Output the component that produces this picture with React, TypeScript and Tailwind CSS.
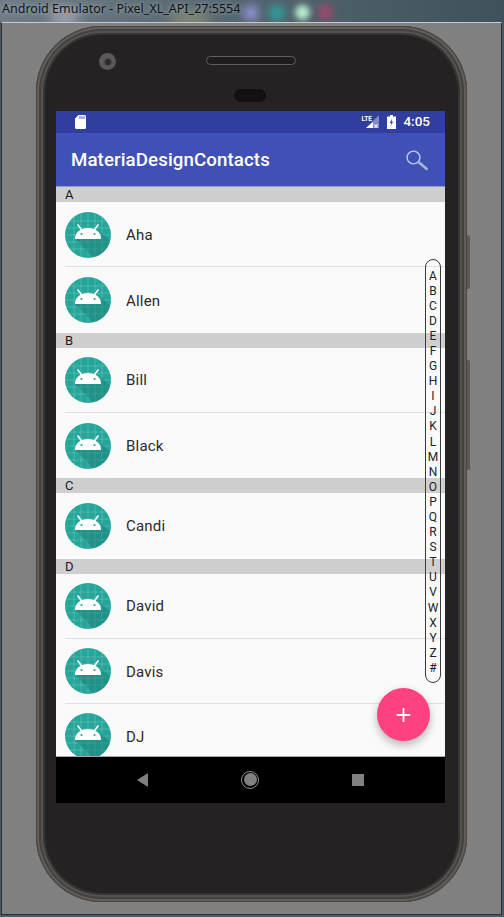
import React from "react";

const Avatar = () => (
  <svg width="46" height="46" viewBox="0 0 46 46" className="shrink-0 mt-[0.5px]">
    <defs>
      <clipPath id="avatarClip">
        <circle cx="23" cy="23" r="23" />
      </clipPath>
    </defs>
    <g clipPath="url(#avatarClip)">
      <rect width="46" height="46" fill="#26a69a" />
      <g stroke="#ffffff" strokeOpacity="0.22" strokeWidth="0.8">
        <path d="M0 9H46M0 16H46M0 23H46M0 30H46M0 37H46M9 0V46M16 0V46M23 0V46M30 0V46M37 0V46" />
      </g>
      <path d="M10 27 L30 47 L50 47 L50 34 L36 20 L36 27 Z" fill="#17776e" opacity="0.42" />
    </g>
    <path d="M10 27 C10 20 15.5 16 23 16 C30.5 16 36 20 36 27 Z" fill="#ffffff" />
    <path d="M13 13 L17 18.5 M33 13 L29 18.5" stroke="#ffffff" strokeWidth="1.6" strokeLinecap="round" />
    <circle cx="16.5" cy="22" r="1.1" fill="#26a69a" />
    <circle cx="29.5" cy="22" r="1.1" fill="#26a69a" />
  </svg>
);

const Row = ({ name, divider = true }: { name: string; divider?: boolean }) => (
  <div className="h-[65.2px] shrink-0 pl-[9px] flex">
    <div className={`flex-1 flex items-center gap-[15px] ${divider ? "border-b border-[#dfe2e2]" : ""}`}>
      <Avatar />
      <span className="mt-[1.6px] text-[15px] text-[#2b2b2b] tracking-[0.2px] w-[60px]">{name}</span>
    </div>
  </div>
);

const Section = ({ label }: { label: string }) => (
  <div className="h-[15.2px] shrink-0 bg-[#cfcfcf] pl-[9px] flex items-center text-[13px] leading-none text-[#1a1a1a]">
    {label}
  </div>
);

const letters = "ABCDEFGHIJKLMNOPQRSTUVWXYZ#".split("");

export default function App() {
  return (
    <div
      className="w-[504px] h-[917px] relative overflow-hidden bg-[#4a5a64] flex flex-col"
      style={{ fontFamily: "Roboto, sans-serif" }}
    >
      {/* desktop title strip */}
      <div className="h-[22px] shrink-0 relative overflow-hidden bg-gradient-to-r from-[#6f7c86] via-[#53656f] to-[#3f525c]">
        <div className="absolute left-[50px] top-[8px] w-[30px] h-[20px] rounded-full bg-[#c8c0d0] opacity-50 blur-[6px]" />
        <div className="absolute left-[170px] top-[12px] w-[40px] h-[16px] rounded-full bg-[#a8a070] opacity-50 blur-[6px]" />
        <div className="absolute left-[243px] top-[5px] w-[16px] h-[16px] rounded-full bg-[#8f8fd0] blur-[4px]" />
        <div className="absolute left-[269px] top-[5px] w-[16px] h-[16px] rounded-full bg-[#2f9f9f] blur-[4px]" />
        <div className="absolute left-[295px] top-[5px] w-[15px] h-[15px] rounded-full bg-[#b8f0d0] blur-[3px]" />
        <div className="absolute left-[319px] top-[5px] w-[13px] h-[15px] rounded-full bg-[#b0446c] blur-[4px]" />
        <span
          className="absolute left-[2px] top-[0px] text-[12.5px] leading-[18px] text-[#101418] whitespace-nowrap"
          style={{ fontFamily: '"Noto Sans", sans-serif', textShadow: "0 0 5px rgba(255,255,255,0.55)" }}
        >
          Android Emulator - Pixel_XL_API_27:5554
        </span>
      </div>

      {/* emulator window */}
      <div className="ml-[1px] w-[501px] h-[893px] shrink-0 border border-[#2b3238] border-t-[#c5ccd0] bg-[#808080]">
        <div className="relative mt-[3px] ml-[34px] w-[431px] h-[876px]">
          {/* side buttons */}
          <div className="absolute left-[430px] top-[209px] w-[4px] h-[54px] bg-[#5c5a58] rounded-r-[2px]" />
          <div className="absolute left-[430px] top-[334px] w-[4px] h-[110px] bg-[#5c5a58] rounded-r-[2px]" />

          {/* phone body */}
          <div className="relative h-full rounded-[66px] bg-[#252223] pt-[85px] pl-[20px] shadow-[inset_0_0_0_1px_#4a4644,inset_0_0_0_3px_#615d5a,inset_0_0_0_5px_#45413f,inset_0_0_0_7px_#565250,inset_0_0_0_9px_#383535]">
            {/* camera */}
            <div className="absolute left-[63px] top-[27px] w-[17px] h-[17px] rounded-full bg-[#5a5858] flex items-center justify-center">
              <div className="w-[8px] h-[8px] rounded-full bg-[#2a2a2a] border border-[#4a4a4a]" />
            </div>
            {/* speaker */}
            <div className="absolute left-[170px] top-[30px] w-[90px] h-[9px] rounded-full bg-[#1e1c1c] border border-[#625e5c]" />
            {/* sensor */}
            <div className="absolute left-[198px] top-[63px] w-[32px] h-[13px] rounded-full bg-[#121010]" />

            {/* screen */}
            <div className="relative w-[389px] h-[692px] flex flex-col overflow-hidden">
              {/* status bar */}
              <div className="h-[22px] shrink-0 bg-[#303f9f] flex items-center text-white pl-[19px] pr-[15px]">
                <svg width="11" height="14" viewBox="0 0 11 14">
                  <path d="M3.5 0H9.5A1.5 1.5 0 0 1 11 1.5V12.5A1.5 1.5 0 0 1 9.5 14H1.5A1.5 1.5 0 0 1 0 12.5V3.5Z" fill="#ffffff" />
                  <path d="M5 1V4M7 1V4M9 1V4" stroke="#303f9f" strokeWidth="0.8" />
                </svg>
                <div className="flex-1" />
                <svg width="18" height="16" viewBox="0 0 18 16" className="mr-[8px]">
                  <path d="M18 1V14H5Z" fill="#ffffff" opacity="0.4" />
                  <path d="M12 8V14H5Z" fill="#ffffff" />
                  <path d="M13.5 10.5L16.5 14M16.5 10.5L13.5 14" stroke="#ffffff" strokeWidth="1.1" />
                  <text x="0.5" y="6.5" fontSize="6.5" fontWeight="700" fill="#ffffff" fontFamily="Roboto, sans-serif">LTE</text>
                </svg>
                <svg width="9" height="14" viewBox="0 0 9 14" className="mr-[7px]">
                  <path d="M3 0H6V1.5H9V14H0V1.5H3Z" fill="#ffffff" />
                  <path d="M5.2 3.5L2.8 8H4.3L3.6 11L6.2 6.7H4.7Z" fill="#303f9f" />
                </svg>
                <span className="text-[13.5px] font-medium leading-none">4:05</span>
              </div>

              {/* toolbar */}
              <div className="h-[54px] shrink-0 bg-[#3f51b5] border-b border-[#8f99d0] flex items-center justify-between pl-[15px] pr-[15px]">
                <span className="mt-[2px] text-[18.7px] font-medium text-white tracking-[0.1px]">MateriaDesignContacts</span>
                <svg width="24" height="24" viewBox="0 0 24 24">
                  <circle cx="7.5" cy="9.5" r="6.4" fill="none" stroke="#c5cae9" strokeWidth="1.4" />
                  <path d="M12.8 14.3L20.5 20.8" stroke="#a9b2da" strokeWidth="2.8" strokeLinecap="round" />
                </svg>
              </div>

              {/* list */}
              <div className="flex-1 min-h-0 overflow-hidden bg-[#fafafa] flex flex-col relative">
                <Section label="A" />
                <Row name="Aha" />
                <Row name="Allen" divider={false} />
                <Section label="B" />
                <Row name="Bill" />
                <Row name="Black" divider={false} />
                <Section label="C" />
                <Row name="Candi" divider={false} />
                <Section label="D" />
                <Row name="David" />
                <Row name="Davis" />
                <Row name="DJ" />
                <div className="absolute left-0 right-0 bottom-0 h-px bg-[#a8a4a4]" />
              </div>

              {/* nav bar */}
              <div className="h-[46px] shrink-0 bg-black relative flex items-center pb-[1px]">
                <div className="w-full flex items-center">
                  <div className="ml-[81px] w-0 h-0 border-y-[7px] border-y-transparent border-r-[11px] border-r-[#808080]" />
                  <div className="ml-[93px] w-[18px] h-[18px] rounded-full border border-[#909090] flex items-center justify-center">
                    <div className="w-[13px] h-[13px] rounded-full bg-[#808080]" />
                  </div>
                  <div className="ml-[93px] w-[12px] h-[12px] bg-[#808080]" />
                </div>
              </div>

              {/* index bar */}
              <div className="absolute left-[369px] top-[148px] w-[16px] h-[424px] rounded-[9px] border border-[#3a3a3a] flex flex-col items-center pt-[8.5px]">
                {letters.map((l) => (
                  <span key={l} className="h-[15.1px] shrink-0 text-[12px] leading-[15.1px] text-[#222]">
                    {l}
                  </span>
                ))}
              </div>

              {/* fab */}
              <div className="absolute left-[321px] top-[577px] w-[53px] h-[53px] rounded-full bg-[#ff4081] flex items-center justify-center shadow-[0_4px_8px_rgba(0,0,0,0.28)]">
                <svg width="14" height="14" viewBox="0 0 14 14" className="-translate-x-[0.5px]">
                  <path d="M7 0V14M0 7H14" stroke="#ffffff" strokeWidth="1.8" />
                </svg>
              </div>
            </div>
          </div>
        </div>
      </div>
    </div>
  );
}
